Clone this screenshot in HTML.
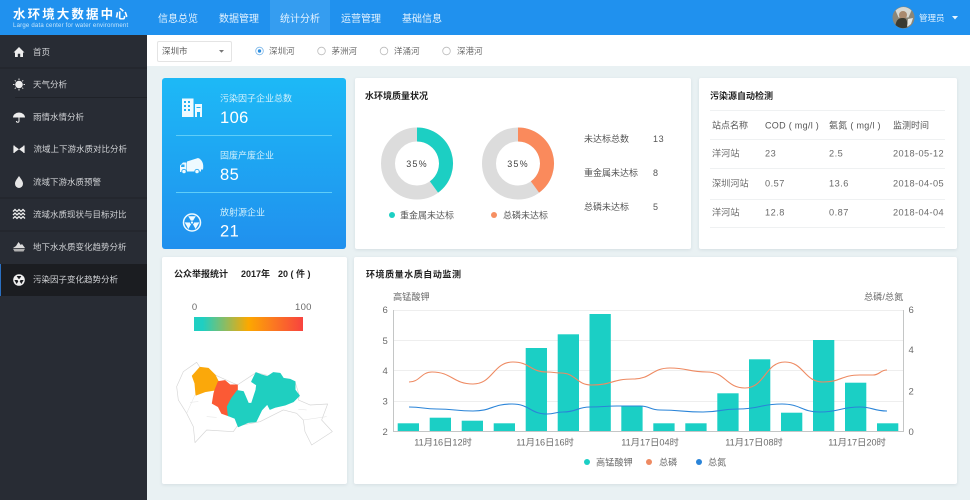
<!DOCTYPE html>
<html lang="zh">
<head>
<meta charset="utf-8">
<title>水环境大数据中心</title>
<style>
html,body{margin:0;padding:0;width:970px;height:500px;overflow:hidden;background:#e9f1f3}
body{position:relative;font-family:"Liberation Sans","Noto Sans CJK SC",sans-serif}
.b{position:absolute}
.card{background:#fff;border-radius:2px;box-shadow:0 1px 3px rgba(120,140,150,.18)}
svg{position:absolute;left:0;top:0}
text{font-family:"Liberation Sans","Noto Sans CJK SC",sans-serif}
.t{font-size:9px;font-weight:700;fill:#222}
.g{font-size:9px;fill:#555}
.m{font-size:9.2px;fill:#6a6a6a}
.s{font-size:8.5px;fill:#cfd1d4}
.n{font-size:10px;fill:#e2f2ff}
.l{font-size:9px;fill:#d0f0fc}
.v{font-size:16.5px;fill:#fff;letter-spacing:.4px}
.a{font-size:9.5px;fill:#6a6a6a}
</style>
</head>
<body>
<div class="b" style="left:0;top:0;width:970px;height:35px;background:#2091ee"></div>
<div class="b" style="left:270px;top:0;width:60px;height:35px;background:#359df0"></div>
<div class="b" style="left:0;top:35px;width:147px;height:465px;background:#282c34"></div>
<div class="b" style="left:0;top:264px;width:147px;height:32px;background:#1b1d21"></div>
<div class="b" style="left:0;top:264px;width:1px;height:32px;background:#2a6fc0"></div>
<div class="b" style="left:147px;top:35px;width:823px;height:31px;background:#fff"></div>
<div class="b" style="left:157px;top:41px;width:73px;height:19px;background:#fff;border:1px solid #e4e4e4;border-radius:2px"></div>
<div class="b" style="left:162px;top:78px;width:184px;height:171px;border-radius:3px;background:linear-gradient(180deg,#1db9f6,#2090ee);"></div>
<div class="b card" style="left:355px;top:78px;width:336px;height:171px"></div>
<div class="b card" style="left:699px;top:78px;width:258px;height:171px"></div>
<div class="b card" style="left:162px;top:257px;width:185px;height:227px"></div>
<div class="b card" style="left:354px;top:257px;width:603px;height:227px"></div>
<div class="b" style="left:194px;top:317px;width:109px;height:14px;background:linear-gradient(90deg,#1fcfc2 0%,#1fcfc2 8%,#fca800 50%,#fb7a20 72%,#f8433f 100%)"></div>

<svg width="970" height="500" viewBox="0 0 970 500" xmlns="http://www.w3.org/2000/svg">
<!-- Header -->
<text x="13" y="18.500" style="font-size:12.500px;font-weight:700;fill:#fff;letter-spacing:2.100px">水环境大数据中心</text>
<text x="13" y="26.800" style="font-size:6.050px;fill:#c6e6fc;letter-spacing:.2px">Large data center for water environment</text>
<text x="158" y="22" class="n">信息总览</text>
<text x="219" y="22" class="n">数据管理</text>
<text x="280" y="22" class="n">统计分析</text>
<text x="341" y="22" class="n">运营管理</text>
<text x="402" y="22" class="n">基础信息</text>
<circle cx="903.500" cy="17.500" r="11" fill="#8a8678"/>
<path d="M895.500 10.500a11 11 0 0 1 16 0l-3 7h-10z" fill="#d6d8d2"/>
<circle cx="903" cy="15" r="4" fill="#a98a6e"/>
<path d="M895.500 25c1-6 4-7 7.500-7s4 2 5 9a11 11 0 0 1-12.500-2z" fill="#3a3a30"/>
<path d="M908 19l5-1-2 6-4 3z" fill="#e8e8e2"/>
<text x="919" y="21" style="font-size:8.500px;fill:#e2f2ff">管理员</text>
<path d="M952 16h6l-3 3.500z" fill="#e8f5ff"/>

<!-- Sidebar dividers -->
<path d="M15 97.500H147M0 198H147M0 231H147M0 68H147" stroke="#1f2228" stroke-width="1"/>
<!-- Sidebar labels -->
<text x="33" y="55" class="s">首页</text>
<text x="33" y="87.500" class="s">天气分析</text>
<text x="33" y="120" class="s">雨情水情分析</text>
<text x="33.500" y="152" class="s">流域上下游水质对比分析</text>
<text x="33" y="185" class="s">流域下游水质预警</text>
<text x="33" y="217.500" class="s">流域水质现状与目标对比</text>
<text x="33" y="250" class="s">地下水水质变化趋势分析</text>
<text x="33" y="282.500" class="s">污染因子变化趋势分析</text>
<!-- Sidebar icons -->
<path d="M13.500 52.500L19 47L24.500 52.500H23V57H20.200V53.800H17.800V57H15V52.500Z" fill="#eee"/>
<circle cx="19" cy="84.500" r="3.800" fill="#eee"/>
<path d="M19 78.500v1.500M19 89v1.500M13 84.500h1.500M23.500 84.500H25M14.800 80.300l1 1M22.200 87.700l1 1M14.800 88.700l1-1M22.200 81.300l1-1" stroke="#ddd" stroke-width="1"/>
<path d="M13 117.500A6 5 0 0 1 25 117.500Z" fill="#eee"/>
<path d="M19 117v4a1.300 1.300 0 0 1-2.600 0" fill="none" stroke="#eee" stroke-width="1"/>
<path d="M14 145.500v7.500M24 145.500v7.500" stroke="#eee" stroke-width="1.200"/>
<path d="M14.500 146L19 149.200L14.500 152.500ZM23.500 146L19 149.200L23.500 152.500Z" fill="#eee"/>
<path d="M19 176C20.800 178.800 23 181 23 183.800A4 4.200 0 0 1 15 183.800C15 181 17.200 178.800 19 176Z" fill="#e6e6e6"/>
<path d="M13 211.500l2-2 2 2 2-2 2 2 2-2 2 2M13 215l2-2 2 2 2-2 2 2 2-2 2 2M13 218.500l2-2 2 2 2-2 2 2 2-2 2 2" fill="none" stroke="#eee" stroke-width="1.300"/>
<path d="M13 248L16 246L18.500 242L20.800 245L22 244L25 248Z" fill="#ddd"/>
<path d="M13 248.800H25L23.500 251.500H14.500Z" fill="#b0b0b0"/>
<g transform="translate(19 280)">
<circle r="5.800" fill="#f0f0f0"/>
<g fill="#1b1d21"><path d="M-2.300-4L2.300-4L.7-1.200A1.400 1.400 0 0 0-.7-1.200Z"/><path d="M-2.300-4L2.300-4L.7-1.200A1.400 1.400 0 0 0-.7-1.200Z" transform="rotate(120)"/><path d="M-2.300-4L2.300-4L.7-1.200A1.400 1.400 0 0 0-.7-1.200Z" transform="rotate(240)"/></g>
</g>

<!-- Filter bar -->
<text x="162" y="54" style="font-size:8.500px;fill:#5c5c5c">深圳市</text>
<path d="M219 50h5l-2.500 2.800z" fill="#777"/>
<circle cx="259.500" cy="51" r="3.800" fill="#fff" stroke="#7db8ea" stroke-width=".8"/><circle cx="259.500" cy="51" r="1.700" fill="#2f8fe0"/>
<text x="269" y="54" style="font-size:8.500px;fill:#6a6a6a">深圳河</text>
<circle cx="321.500" cy="51" r="3.800" fill="#fff" stroke="#bbb" stroke-width=".8"/>
<text x="331.500" y="54" style="font-size:8.500px;fill:#6a6a6a">茅洲河</text>
<circle cx="384" cy="51" r="3.800" fill="#fff" stroke="#bbb" stroke-width=".8"/>
<text x="394" y="54" style="font-size:8.500px;fill:#6a6a6a">洋涌河</text>
<circle cx="446.500" cy="51" r="3.800" fill="#fff" stroke="#bbb" stroke-width=".8"/>
<text x="457" y="54" style="font-size:8.500px;fill:#6a6a6a">深港河</text>

<!-- Blue card -->
<path d="M176 135.500H332M176 192.500H332" stroke="#5fcdf8" stroke-width="1"/>
<text x="220" y="101.500" class="l">污染因子企业总数</text>
<text x="220" y="123" class="v">106</text>
<text x="220" y="158.500" class="l">固废产废企业</text>
<text x="220" y="180" class="v">85</text>
<text x="220" y="215.500" class="l">放射源企业</text>
<text x="220" y="236.500" class="v">21</text>
<!-- building -->
<path d="M182 98.500H193.500V117H182Z" fill="#eefaff"/>
<path d="M195 104H202V117H195Z" fill="#eefaff"/>
<path d="M184 101h2v2h-2zM188 101h2v2h-2zM184 105h2v2h-2zM188 105h2v2h-2zM184 109h2v2h-2zM188 109h2v2h-2zM196.500 107h4v1h-4zM197 112h3v5h-3z" fill="#1fb0f2"/>
<!-- truck -->
<path d="M187 161.500L198 158C202 159.500 204 163.500 203 169.500H187Z" fill="#eefaff"/>
<path d="M180 171V165.500L183 162.500H186.500V172H180Z" fill="#eefaff"/>
<path d="M181.500 164.500h3v2.500h-3.500z" fill="#22a6f2"/>
<path d="M187 170.500H201" stroke="#eefaff" stroke-width="2"/>
<circle cx="184" cy="171.500" r="2.200" fill="#eefaff" stroke="#22a6f2" stroke-width=".9"/>
<circle cx="197" cy="171.500" r="2.200" fill="#eefaff" stroke="#22a6f2" stroke-width=".9"/>
<!-- radiation -->
<g transform="translate(192 222.500)">
<circle r="8.500" fill="none" stroke="#eefaff" stroke-width="1.500"/>
<g fill="#eefaff"><path d="M-3.800-6.300L3.800-6.300L1-1.700A1.900 1.900 0 0 0-1-1.700Z"/><path d="M-3.800-6.300L3.800-6.300L1-1.700A1.900 1.900 0 0 0-1-1.700Z" transform="rotate(120)"/><path d="M-3.800-6.300L3.800-6.300L1-1.700A1.900 1.900 0 0 0-1-1.700Z" transform="rotate(240)"/><circle r="1.100"/></g>
</g>

<!-- Water quality card -->
<text x="365" y="99" class="t">水环境质量状况</text>
<circle cx="417" cy="163.500" r="29" fill="none" stroke="#dcdcdc" stroke-width="14"/>
<path d="M417 134.500A29 29 0 0 1 434 187" fill="none" stroke="#1ccfc3" stroke-width="14"/>
<circle cx="518" cy="163.500" r="29" fill="none" stroke="#dcdcdc" stroke-width="14"/>
<path d="M518 134.500A29 29 0 0 1 535 187" fill="none" stroke="#fa8a5c" stroke-width="14"/>
<text x="417" y="167" text-anchor="middle" style="font-size:9px;fill:#444;letter-spacing:1.200px">35%</text>
<text x="518" y="167" text-anchor="middle" style="font-size:9px;fill:#444;letter-spacing:1.200px">35%</text>
<circle cx="392" cy="215" r="3" fill="#1ccfc3"/>
<text x="400" y="218.500" class="g">重金属未达标</text>
<circle cx="494" cy="215" r="3" fill="#f68f62"/>
<text x="503" y="218.500" class="g">总磷未达标</text>
<text x="584" y="142" class="g">未达标总数</text>
<text x="653" y="142" class="g" style="letter-spacing:.6px">13</text>
<text x="584" y="176" class="g">重金属未达标</text>
<text x="653" y="176" class="g">8</text>
<text x="584" y="210" class="g">总磷未达标</text>
<text x="653" y="210" class="g">5</text>

<!-- Table card -->
<text x="710" y="99" class="t">污染源自动检测</text>
<path d="M710 110.500H945M710 139.500H945M710 168.500H945M710 199.500H945M710 227.500H945" stroke="#eff1f2" stroke-width="1"/>
<text x="712" y="128.500" class="g">站点名称</text>
<text x="765" y="128.500" class="g" style="letter-spacing:.3px">COD ( mg/l )</text>
<text x="829" y="128.500" class="g" style="letter-spacing:.3px">氨氮 ( mg/l )</text>
<text x="893" y="128.500" class="g">监测时间</text>
<text x="712" y="156.500" class="m">洋河站</text><text x="765" y="156.500" class="m" style="letter-spacing:.5px">23</text><text x="829" y="156.500" class="m" style="letter-spacing:.5px">2.5</text><text x="893" y="156.500" class="m" style="letter-spacing:.4px">2018-05-12</text>
<text x="712" y="186.500" class="m">深圳河站</text><text x="765" y="186.500" class="m" style="letter-spacing:.5px">0.57</text><text x="829" y="186.500" class="m" style="letter-spacing:.5px">13.6</text><text x="893" y="186.500" class="m" style="letter-spacing:.4px">2018-04-05</text>
<text x="712" y="215.500" class="m">洋河站</text><text x="765" y="215.500" class="m" style="letter-spacing:.5px">12.8</text><text x="829" y="215.500" class="m" style="letter-spacing:.5px">0.87</text><text x="893" y="215.500" class="m" style="letter-spacing:.4px">2018-04-04</text>

<!-- Public reports card -->
<text x="174" y="277" class="t">公众举报统计</text>
<text x="241" y="277" class="t">2017年</text>
<text x="278" y="277" class="t">20 ( 件 )</text>
<text x="194.500" y="310" class="a" text-anchor="middle">0</text>
<text x="295" y="310" class="a" style="letter-spacing:.3px">100</text>

<!-- Map -->
<g transform="translate(150 250) scale(.3333)" stroke-linejoin="round">
<path d="M80 410L100 365L140 337L150 352L195 375L262 405L318 368L435 395L448 437L445 450L480 465L533 462L515 510L547 545L485 585L465 545L460 510L440 490L400 480L330 515L262 528L250 545L170 540L135 578L130 530L110 490L85 450Z" fill="#fff" stroke="#d6d6d6" stroke-width="2"/>
<path d="M120 457L145 455M170 500L200 502M445 478L470 480M135 435L110 490M460 510L530 500" fill="none" stroke="#e2e2e2" stroke-width="1.500"/>
<path d="M127 378L150 352L175 355L195 375L205 395L195 420L165 425L138 435L135 400Z" fill="#fba80a" stroke="#fba80a" stroke-width="3"/>
<path d="M205 395L225 392L240 405L262 405L262 420L245 445L232 470L235 497L215 490L205 470L187 460L192 430L195 420Z" fill="#fb5a35" stroke="#fb5a35" stroke-width="3"/>
<path d="M232 470L245 445L262 422L280 425L295 460L305 460L318 420L320 405L305 395L318 368L335 375L352 380L370 368L390 370L400 385L420 388L435 395L435 420L448 437L430 455L405 465L375 472L360 478L352 462L335 480L318 515L295 517L265 530L255 505L235 497Z" fill="#1fcfc0" stroke="#1fcfc0" stroke-width="3"/>
</g>

<!-- Chart -->
<text x="366" y="277.500" class="t" style="letter-spacing:.55px">环境质量水质自动监测</text>
<text x="393" y="300" class="m">高锰酸钾</text>
<text x="864" y="300" class="m">总磷/总氮</text>
<path d="M393 310.500H903M393 340.500H903M393 370.500H903M393 401.500H903" stroke="#eeeeee" stroke-width="1"/>
<path d="M393.500 310V431.500H903.500V310" fill="none" stroke="#c4c6c6" stroke-width="1"/>
<g fill="#1bcfc5">
<rect x="397.700" y="423.300" width="21.300" height="7.700"/>
<rect x="429.700" y="417.700" width="21.300" height="13.300"/>
<rect x="461.700" y="420.700" width="21.300" height="10.300"/>
<rect x="493.700" y="423.300" width="21.300" height="7.700"/>
<rect x="525.700" y="348" width="21.300" height="83"/>
<rect x="557.700" y="334.300" width="21.300" height="96.700"/>
<rect x="589.500" y="314" width="21.300" height="117"/>
<rect x="621.300" y="406" width="21.300" height="25"/>
<rect x="653.300" y="423.300" width="21.300" height="7.700"/>
<rect x="685.300" y="423.300" width="21.300" height="7.700"/>
<rect x="717.300" y="393.300" width="21.300" height="37.700"/>
<rect x="749" y="359.300" width="21.300" height="71.700"/>
<rect x="781" y="412.700" width="21.300" height="18.300"/>
<rect x="813" y="340" width="21.300" height="91"/>
<rect x="845" y="382.700" width="21.300" height="48.300"/>
<rect x="877" y="423.300" width="21.300" height="7.700"/>
</g>
<path d="M409 382C420 382,421 372,432 372C452 372,453 384,473 384C493 384,493 362,513 362C530 362,530 372,547 372C554 372,554 373,561 373C576 373,576 385,592 385C612 385,612 379,633 379C652 379,651 368,670 368C688 368,688 372,707 372C726 372,726 388,745 388C765 388,765 362,785 362C804 362,804 382,823 382C841 382,841 375,860 375C866 375,867 375,873 375C880 375,880 370,887 370" fill="none" stroke="#ee8a62" stroke-width="1.100"/>
<path d="M409 407C423 407,423 409,437 409C455 409,455 411,473 411C492 411,492 404,512 404C530 404,530 414,547 414C555 414,555 412,563 412C577 412,577 407,590 407C604 407,604 406,617 406C628 406,628 406,640 406C650 406,650 410,660 410C682 410,682 412,703 412C720 412,720 409,738 409C760 409,760 404,782 404C801 404,801 412,820 412C840 412,840 407,860 407C873 407,873 411,887 411" fill="none" stroke="#2a84d8" stroke-width="1.100"/>
<text x="382.500" y="313" class="a">6</text>
<text x="382.500" y="344" class="a">5</text>
<text x="382.500" y="374" class="a">4</text>
<text x="382.500" y="404.500" class="a">3</text>
<text x="382.500" y="435" class="a">2</text>
<text x="908.500" y="313" class="a">6</text>
<text x="908.500" y="353" class="a">4</text>
<text x="908.500" y="394.500" class="a">2</text>
<text x="908.500" y="435" class="a">0</text>
<text x="443" y="445.500" class="m" text-anchor="middle">11月16日12时</text>
<text x="545" y="445.500" class="m" text-anchor="middle">11月16日16时</text>
<text x="650" y="445.500" class="m" text-anchor="middle">11月17日04时</text>
<text x="754" y="445.500" class="m" text-anchor="middle">11月17日08时</text>
<text x="857" y="445.500" class="m" text-anchor="middle">11月17日20时</text>
<circle cx="587" cy="462" r="3" fill="#1bcfc5"/>
<text x="596" y="465.500" class="m">高锰酸钾</text>
<circle cx="649" cy="462" r="3" fill="#ee8a62"/>
<text x="659" y="465.500" class="m">总磷</text>
<circle cx="699" cy="462" r="3" fill="#2a84d8"/>
<text x="708" y="465.500" class="m">总氮</text>
</svg>
</body>
</html>
